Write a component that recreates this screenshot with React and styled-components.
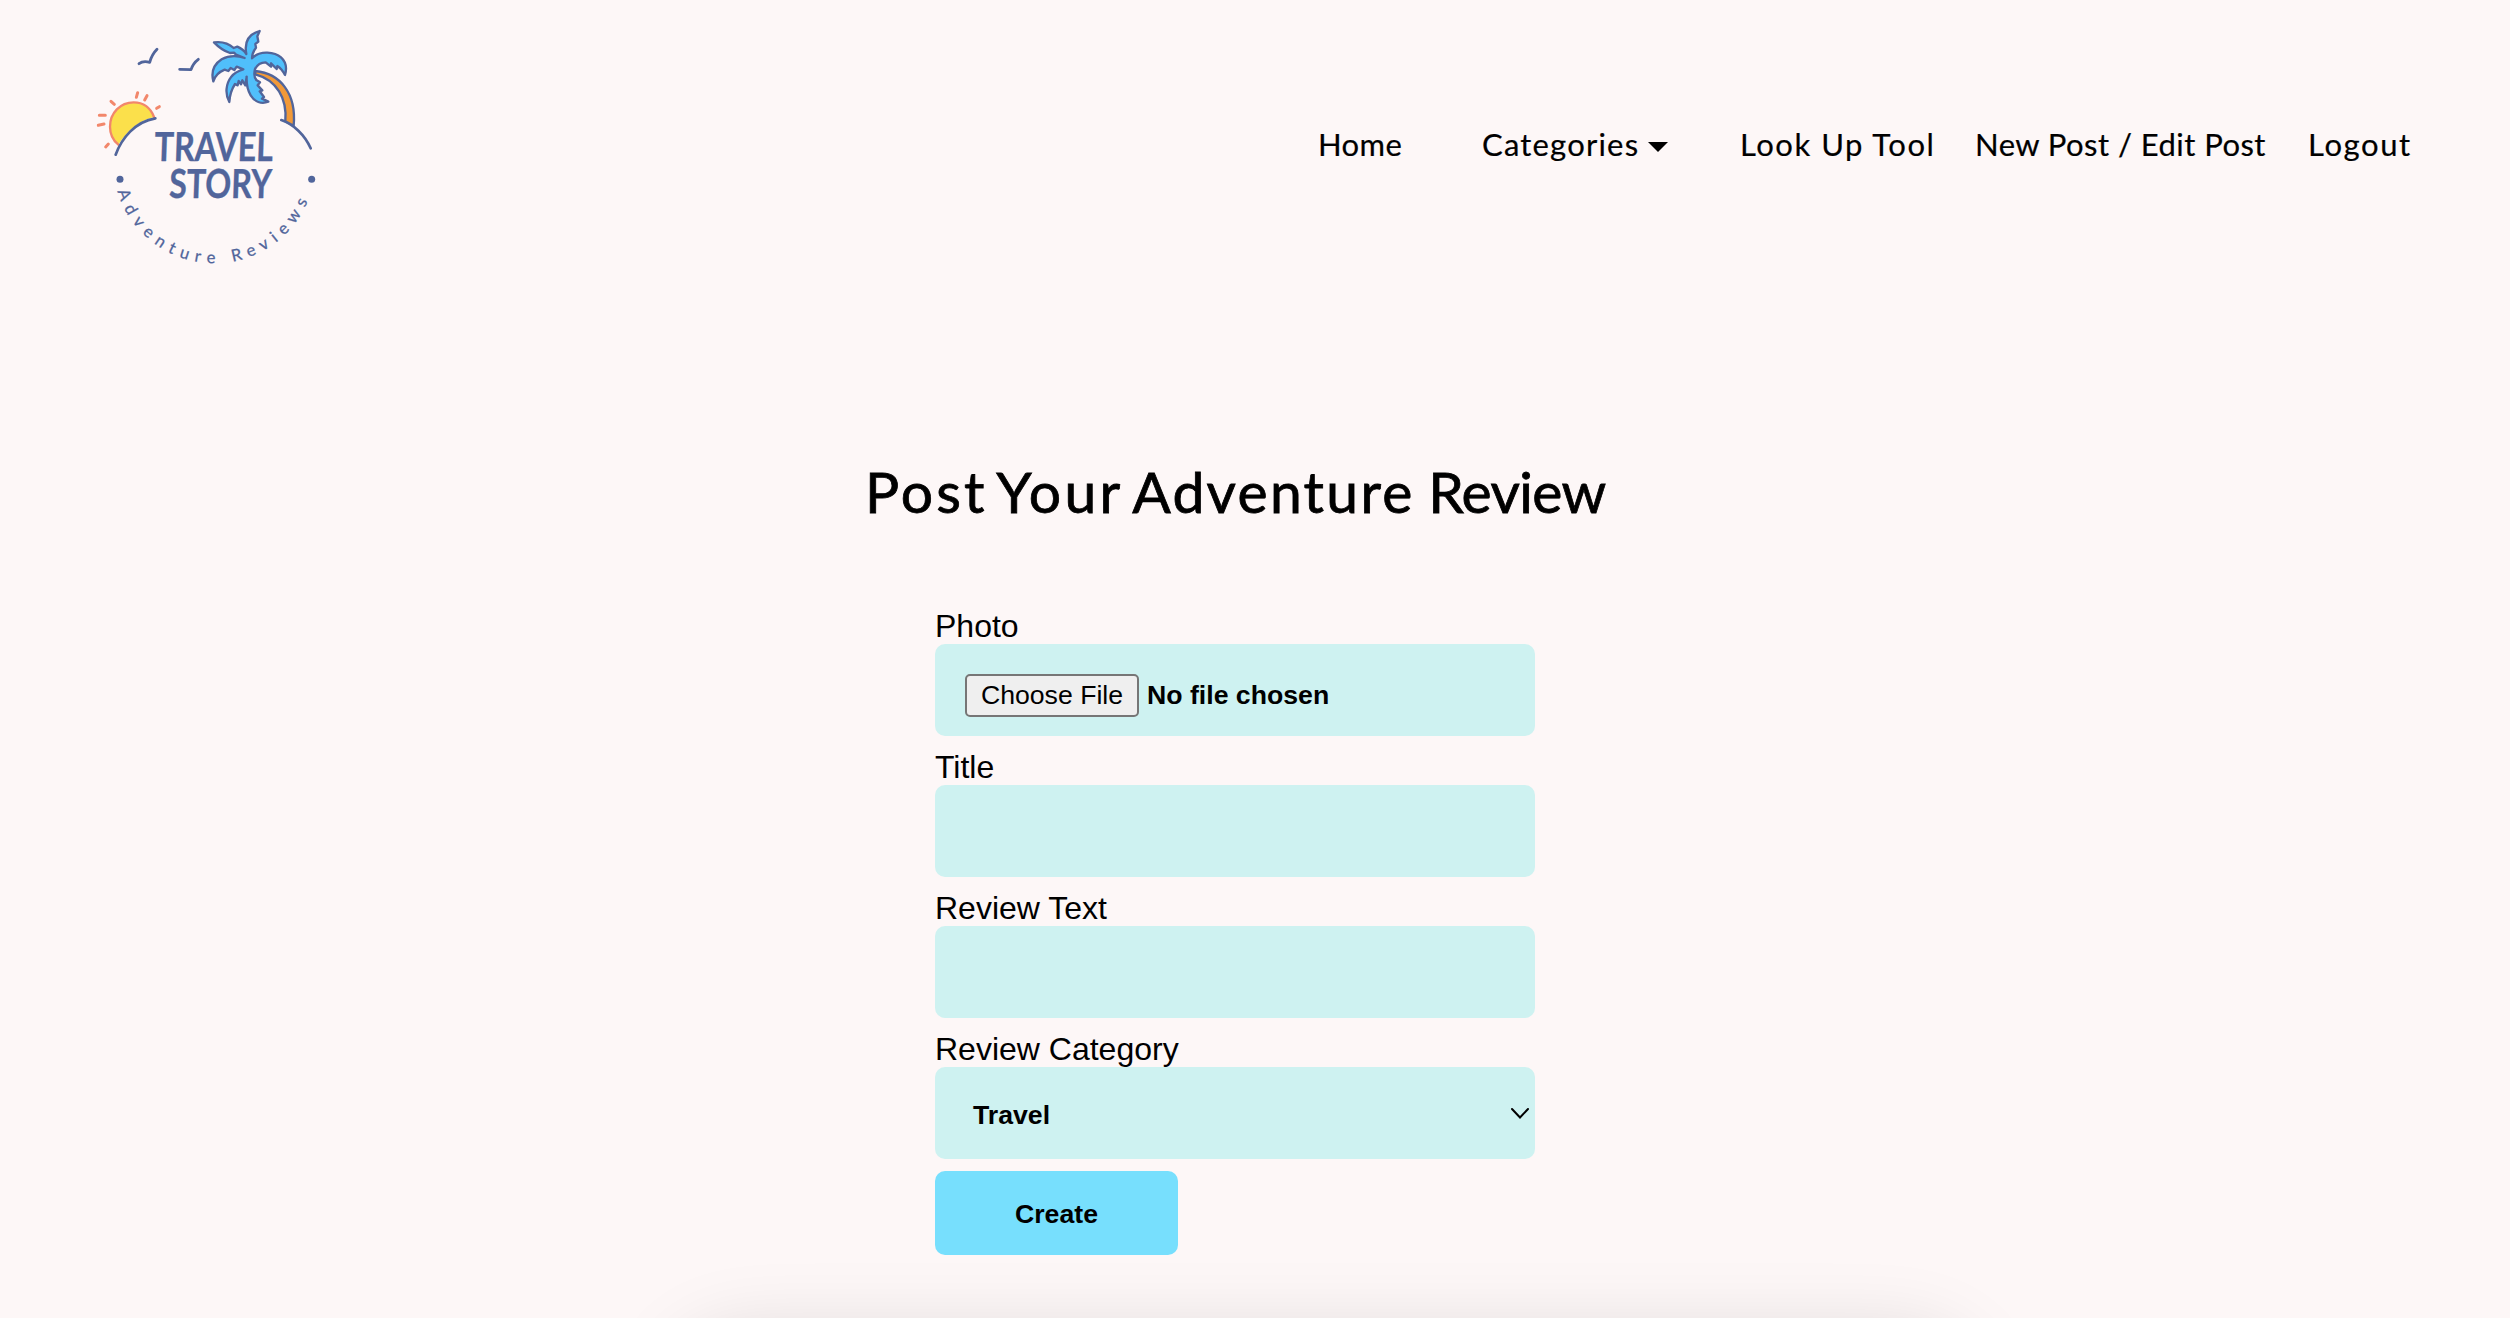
import React from "react";
import styled, { createGlobalStyle } from "styled-components";

const script = `Lato, sans-serif`;
const sans = `"Liberation Sans", Arial, sans-serif`;
const navy = "#51659b";

const GlobalStyle = createGlobalStyle`
  *, *::before, *::after { box-sizing: border-box; }
  body { margin: 0; background: #fdf7f7; color: #000; font-family: ${sans}; }
`;

const Page = styled.div`
  height: 1318px;
  overflow: hidden;
  background: #fdf7f7;
`;

const Header = styled.header`
  display: flex;
  justify-content: space-between;
  align-items: flex-start;
  height: 456px;
  padding: 20px 92px 0 80px;
`;

const LogoArt = styled.svg`
  display: block;
  width: 250px;
  height: 260px;
`;

const Nav = styled.nav`
  display: grid;
  grid-template-columns: 164px 258px 235px 333px 110px;
  margin-top: 106px;
`;

const NavLink = styled.a`
  display: flex;
  align-items: center;
  font: 400 31px/36px ${script};
  letter-spacing: ${(p) => p.$tracking}px;
  white-space: nowrap;
  -webkit-text-stroke: 0.2px #000;
`;

const Caret = styled.span`
  margin: 5px 0 0 9px;
  border: 10px solid transparent;
  border-top-color: #000;
  border-bottom: 0;
`;

const Title = styled.h1`
  margin: 0 0 82px 865px;
  padding-top: 1px;
  font: 400 57px/68px ${script};
  white-space: nowrap;
  -webkit-text-stroke: 0.8px #000;
`;

const Word = styled.span`
  margin-left: ${(p) => p.$shift || 0}px;
  letter-spacing: ${(p) => p.$tracking}px;
`;

const Form = styled.form`
  width: 600px;
  margin-left: 935px;
`;

const Field = styled.div`
  margin-bottom: 12px;
`;

const Label = styled.label`
  display: block;
  height: 37px;
  font-size: 32px;
  line-height: 39px;
`;

const Control = styled.div`
  display: flex;
  align-items: center;
  height: 92px;
  padding: 3px 5px 0 ${(p) => p.$inset || 30}px;
  border-radius: 10px;
  background: #cef2f1;
  font-size: 26.67px;
  font-weight: 700;
`;

const FileButton = styled.span`
  display: flex;
  align-items: center;
  justify-content: center;
  width: 174px;
  height: 43px;
  margin: 8px 8px 0 0;
  border: 2px solid #767676;
  border-radius: 5px;
  background: #efefef;
  font-weight: 400;
`;

const FileName = styled.span`
  margin-top: 8px;
`;

const Selected = styled.span`
  flex: 1;
  margin-top: 2px;
`;

const Chevron = styled.svg`
  width: 20px;
  height: 14px;
  margin-top: -4px;
`;

const Submit = styled.button`
  display: block;
  width: 243px;
  height: 84px;
  padding: 3px 0 0;
  border: 0;
  border-radius: 10px;
  background: #77dffd;
  color: #000;
  font: 700 26.67px ${sans};
`;

const NextPanel = styled.div`
  width: 1316px;
  height: 200px;
  margin: 77px 0 0 666px;
  border-radius: 80px;
  box-shadow: 0 0 76px rgba(0, 0, 0, 0.13);
`;

function Logo() {
  return (
    <LogoArt viewBox="0 0 750 780" fill="none" strokeLinecap="round" strokeLinejoin="round">
      <path d="M115 374C98 360 90 340 90 320C90 279 121 247 161 247C190 247 212 264 222 291C174 303 143 332 115 374Z" fill="#fbe04b" />
      <path
        d="M115 374C98 360 90 340 90 320C90 279 121 247 161 247C190 247 212 264 222 291"
        stroke="#f2876b"
        strokeWidth="7"
      />
      <path
        d="M169 232l4-14M194 240l7-13M93 244l10 9M58 286h18M55 316l17-4M230 265l8-5M77 381l8-9"
        stroke="#f2876b"
        strokeWidth="9"
      />
      <path
        d="M177 131Q190 121 209 127Q216 103 231 88M299 148L333 149Q339 130 355 118"
        stroke={navy}
        strokeWidth="8.5"
      />
      <path d="M107 404C125 355 165 305 226 295M604 300C640 312 675 345 692 385" stroke={navy} strokeWidth="8" />
      <path
        d="M526 153C600 160 650 220 641 317L616 304C622 235 590 180 526 163Z"
        fill="#f19938"
        stroke={navy}
        strokeWidth="7"
      />
      <path
        d="M402 67C425 64 446 70 461 84L472 80Q490 88 499 102C492 65 508 42 539 33L532 49L535 65L526 72L528 83C521 92 516 105 516 115C540 88 586 97 603 112C621 128 620 148 615 165C608 152 602 144 592 138L590 147L573 130L573 140L557 127C543 127 532 133 525 147C521 163 524 175 530 181L540 187L533 196L547 211L539 214L552 231L546 236L565 245C544 253 524 245 512 226C501 208 499 190 500 170L496 196L487 181L483 193L476 183L473 196L465 192C454 209 449 227 448 246C434 221 438 191 454 170Q466 155 490 148L470 140L463 150L452 144L445 153L434 149C416 156 405 168 400 184C393 157 402 133 425 118C445 107 470 106 494 114L468 104L462 98L450 99Q424 90 402 67Z"
        fill="#50bffb"
        stroke={navy}
        strokeWidth="7"
      />
      <circle cx="120" cy="478" r="10.5" fill={navy} />
      <circle cx="695" cy="478" r="10.5" fill={navy} />
      <g
        fill={navy}
        stroke={navy}
        strokeWidth="1"
        fontFamily="Lato, sans-serif"
        fontWeight="700"
        fontSize="120"
      >
        <text x="0" y="0" transform="translate(222 422) skewX(-2)" textLength="356" lengthAdjust="spacingAndGlyphs">
          TRAVEL
        </text>
        <text x="0" y="0" transform="translate(266 535) skewX(-2)" textLength="308" lengthAdjust="spacingAndGlyphs">
          STORY
        </text>
      </g>
      <path id="tagline" d="M112 514A304 304 0 0 0 689 529" />
      <text fill={navy} stroke={navy} strokeWidth="0.8" fontFamily="Lato, sans-serif" fontSize="50">
        <textPath href="#tagline" textLength="745">
          Adventure Reviews
        </textPath>
      </text>
    </LogoArt>
  );
}

export default function App() {
  return (
    <Page>
      <GlobalStyle />
      <Header>
        <Logo />
        <Nav>
          <NavLink $tracking={0.4}>Home</NavLink>
          <NavLink $tracking={1.2}>
            Categories
            <Caret />
          </NavLink>
          <NavLink $tracking={1.5}>Look Up Tool</NavLink>
          <NavLink $tracking={0.45}>New Post / Edit Post</NavLink>
          <NavLink $tracking={1.6}>Logout</NavLink>
        </Nav>
      </Header>
      <Title>
        <Word $tracking={3.1}>Post</Word>{" "}
        <Word $tracking={3.3} $shift={-6}>Your</Word>{" "}
        <Word $tracking={2.3} $shift={-6}>Adventure</Word>{" "}
        <Word $tracking={-0.6} $shift={-1}>Review</Word>
      </Title>
      <Form>
        <Field>
          <Label>Photo</Label>
          <Control>
            <FileButton>Choose File</FileButton>
            <FileName>No file chosen</FileName>
          </Control>
        </Field>
        <Field>
          <Label>Title</Label>
          <Control />
        </Field>
        <Field>
          <Label>Review Text</Label>
          <Control />
        </Field>
        <Field>
          <Label>Review Category</Label>
          <Control $inset={38}>
            <Selected>Travel</Selected>
            <Chevron viewBox="0 0 20 14" fill="none" stroke="#000" strokeWidth="2" strokeLinecap="round">
              <path d="M2 3l8 8.5L18 3" />
            </Chevron>
          </Control>
        </Field>
        <Submit type="button">Create</Submit>
      </Form>
      <NextPanel />
    </Page>
  );
}
